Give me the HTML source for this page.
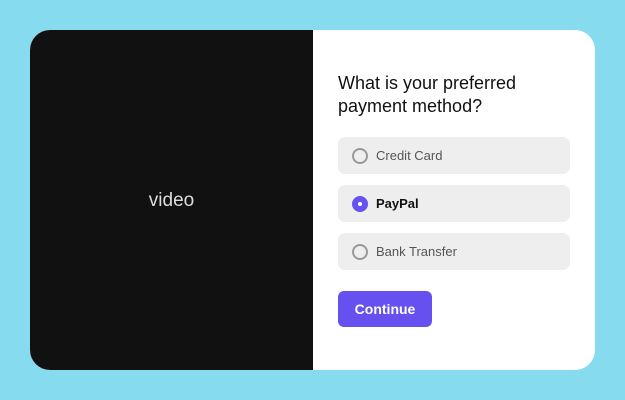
<!DOCTYPE html>
<html><head><style>
body{margin:0;width:625px;height:400px;background:#86dbef;font-family:"Liberation Sans",sans-serif;position:relative;overflow:hidden}
.card{position:absolute;left:30px;top:30px;width:565px;height:340px;background:#fff;border-radius:20px;overflow:hidden}
.video{position:absolute;left:0;top:1px;width:283px;height:340px;background:#111;color:#ddd;font-size:19px;display:flex;align-items:center;justify-content:center}
.title{position:absolute;left:308px;top:42px;font-size:18px;line-height:23px;color:#111}
.opt{position:absolute;left:308px;width:232px;height:37px;background:#eee;border-radius:7px;font-size:13px;color:#555}
.opt .r{position:absolute;left:14px;top:11px;width:12px;height:12px;border:2px solid #999;border-radius:50%}
.opt span{position:absolute;left:38px;top:11px}
.opt.sel{color:#111;font-weight:bold}
.opt.sel .r{border-color:#6652ef;background:#6652ef}
.opt.sel .r:after{content:"";position:absolute;left:4px;top:4px;width:4px;height:4px;background:#fff;border-radius:50%}
.btn{position:absolute;left:308px;top:261px;width:94px;height:36px;background:#6651f0;border-radius:6px;color:#fff;font-weight:bold;font-size:14px;display:flex;align-items:center;justify-content:center}
</style></head><body>
<div class="card">
<div class="video" style="top:0;padding-top:2px;box-sizing:border-box">video</div>
<div class="title">What is your preferred<br>payment method?</div>
<div class="opt" style="top:107px"><div class="r"></div><span>Credit Card</span></div>
<div class="opt sel" style="top:155px"><div class="r"></div><span>PayPal</span></div>
<div class="opt" style="top:203px"><div class="r"></div><span>Bank Transfer</span></div>
<div class="btn">Continue</div>
</div>
</body></html>
